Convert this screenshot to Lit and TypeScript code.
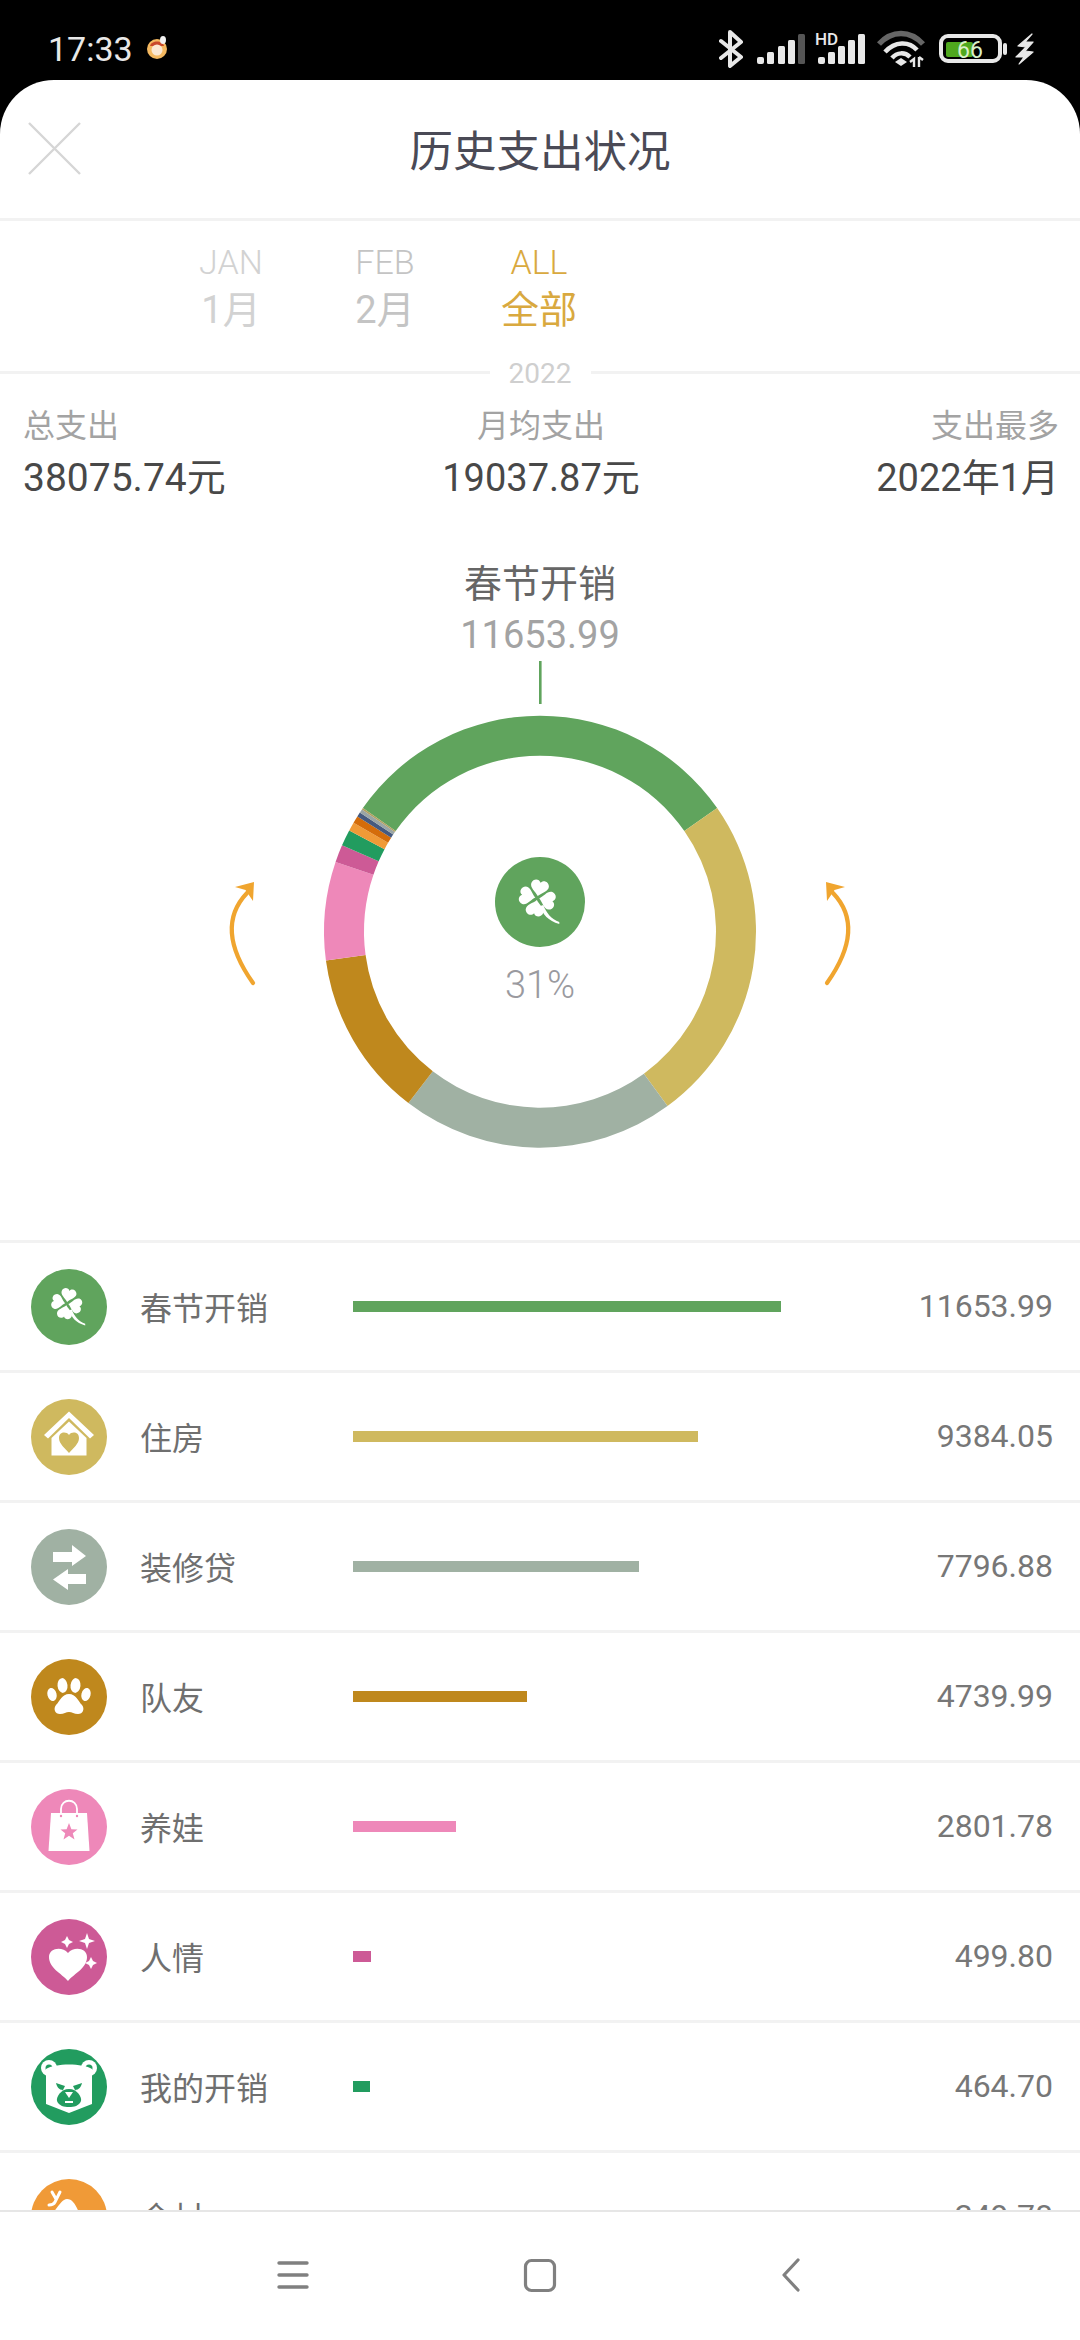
import { LitElement, html, css, svg } from "lit";
import { customElement } from "lit/decorators.js";

const leaf = "M0 -2 C-3 -6 -9.5 -8.5 -9 -13.5 C-8 -18.5 -2 -19.5 0 -15.5 C2 -19.5 8 -18.5 9 -13.5 C9.5 -8.5 3 -6 0 -2Z";
const clover = svg`<g fill="#fff" transform="translate(-2.7 -4)">
  <path d=${leaf} transform="rotate(12)"/>
  <path d=${leaf} transform="rotate(102)"/>
  <path d=${leaf} transform="rotate(192)"/>
  <path d=${leaf} transform="rotate(282)"/>
  <path d="M3 8 C5 16 11 23 22 26 L22 24 C14 21 9 15 6 7Z"/>
</g>`;

const icons: Record<string, unknown> = {
  clover: svg`<g transform="scale(0.84)">${clover}</g>`,
  house: svg`<g fill="#fff">
    <path d="M0 -25.5 L25 -2 L21 1.5 L0 -19 L-21 1.5 L-25 -2Z"/>
    <path d="M0 -15.5 L17.5 1 V18.5 H-17.5 V1Z"/>
    <path d="M0 16 C-4 11 -10 7 -10 1 C-10 -5 -3 -6 0 -2 C3 -6 10 -5 10 1 C10 7 4 11 0 16Z" fill="#cfb95f"/>
  </g>`,
  swap: svg`<g fill="#fff">
    <path d="M-16 -15 H3 V-22 L17 -11 L3 -1 V-5 H-16Z"/>
    <path d="M17 7 H-1 V2 L-16 12.5 L-1 23 V17 H17Z"/>
  </g>`,
  paw: svg`<g fill="#fff">
    <ellipse cx="-17" cy="-2.5" rx="4.6" ry="6.6" transform="rotate(-14 -17 -2.5)"/>
    <ellipse cx="-6.5" cy="-11.5" rx="5" ry="7.4" transform="rotate(-6 -6.5 -11.5)"/>
    <ellipse cx="6.5" cy="-11.5" rx="5" ry="7.4" transform="rotate(6 6.5 -11.5)"/>
    <ellipse cx="17" cy="-2.5" rx="4.6" ry="6.6" transform="rotate(14 17 -2.5)"/>
    <path d="M0 -3 C7 -3 9 4 13 8 C16 12 14 17 9 17 C5 17 3 15 0 15 C-3 15 -5 17 -9 17 C-14 17 -16 12 -13 8 C-9 4 -7 -3 0 -3Z"/>
  </g>`,
  bag: svg`<g>
    <path d="M-18 -14 H18 L20.5 24 H-20.5Z" fill="#fff"/>
    <path d="M-8 -13 V-18 C-8 -29 8 -29 8 -18 V-13" fill="none" stroke="#fff" stroke-width="1.8"/>
    <circle cx="-8" cy="-11" r="1.2" fill="#ee88b9"/><circle cx="8" cy="-11" r="1.2" fill="#ee88b9"/>
    <path d="M0 -4 L2.4 2.2 L8.5 2.4 L3.8 6.2 L5.5 12.5 L0 8.8 L-5.5 12.5 L-3.8 6.2 L-8.5 2.4 L-2.4 2.2Z" fill="#ee88b9"/>
  </g>`,
  heart: svg`<g fill="#fff">
    <path d="M-1 24 C-8 16 -20 11 -20 0 C-20 -9 -7 -11 -1 -4 C5 -11 18 -9 18 0 C18 11 6 16 -1 24Z"/>
    <path d="M-2 -21 L0 -17 L4 -15 L0 -13 L-2 -9 L-4 -13 L-8 -15 L-4 -17Z"/>
    <path d="M18 -24 L20 -18 L26 -16 L20 -14 L18 -8 L16 -14 L10 -16 L16 -18Z"/>
    <path d="M22 0 L24 4 L28 6 L24 8 L22 12 L20 8 L16 6 L20 4Z"/>
  </g>`,
  bear: svg`<g>
    <circle cx="-20" cy="-19" r="8" fill="#fff"/><circle cx="20" cy="-19" r="8" fill="#fff"/>
    <circle cx="-20" cy="-19" r="3.5" fill="#229c5f"/><circle cx="20" cy="-19" r="3.5" fill="#229c5f"/>
    <path d="M-23 -18 C-14 -24 14 -24 23 -18 V17 L0 26 L-23 17Z" fill="#fff"/>
    <path d="M-13 -4 L-4 -1 L-6 3 C-10 3 -12 0 -13 -4Z M13 -4 L4 -1 L6 3 C10 3 12 0 13 -4Z" fill="#229c5f"/>
    <path d="M0 2 C8 2 13 10 12 14 C10 19 5 20 0 20 C-5 20 -10 19 -12 14 C-13 10 -8 2 0 2Z" fill="#229c5f"/>
    <path d="M-4 5 H4 L0 11Z" fill="#fff"/><rect x="-4" y="14" width="8" height="2" fill="#fff"/>
  </g>`,
  orange: svg`<g fill="#fff">
    <path d="M-20 0 C-13 -6 -8 -18 -2 -18 C5 -18 9 -8 12 2 V20 H-20Z"/>
    <path d="M-17 -25 L-13 -18 M-9 -25 L-14 -15 C-15 -13 -17 -12 -20 -12" fill="none" stroke="#fff" stroke-width="3" stroke-linecap="round"/>
  </g>`,
};

interface Item { name: string; color: string; amount: number; text: string; icon: string; }

const items: Item[] = [
  { name: "春节开销", color: "#60a45d", amount: 11653.99, text: "11653.99", icon: "clover" },
  { name: "住房", color: "#cfb95f", amount: 9384.05, text: "9384.05", icon: "house" },
  { name: "装修贷", color: "#a0b1a3", amount: 7796.88, text: "7796.88", icon: "swap" },
  { name: "队友", color: "#bf881d", amount: 4739.99, text: "4739.99", icon: "paw" },
  { name: "养娃", color: "#ee88b9", amount: 2801.78, text: "2801.78", icon: "bag" },
  { name: "人情", color: "#cd5a96", amount: 499.8, text: "499.80", icon: "heart" },
  { name: "我的开销", color: "#229c5f", amount: 464.7, text: "464.70", icon: "bear" },
  { name: "余材", color: "#f09a37", amount: 249.78, text: "249.78", icon: "orange" },
];
const rest = [
  { color: "#d46c0a", amount: 205 },
  { color: "#465a7f", amount: 130 },
  { color: "#9aa5a5", amount: 105 },
  { color: "#b0a060", amount: 45.77 },
];
const TOTAL = 38075.74;

function polar(r: number, deg: number): string {
  const a = (deg * Math.PI) / 180;
  return `${(r * Math.sin(a)).toFixed(2)} ${(-r * Math.cos(a)).toFixed(2)}`;
}
function segment(from: number, to: number, color: string) {
  const large = to - from > 180 ? 1 : 0;
  const d = `M${polar(216, from)} A216 216 0 ${large} 1 ${polar(216, to)} L${polar(176, to)} A176 176 0 ${large} 0 ${polar(176, from)}Z`;
  return svg`<path d=${d} fill=${color}/>`;
}

@customElement("app-root")
export class AppRoot extends LitElement {
  static styles = css`
    :host { display: block; width: 1080px; height: 2340px; background: #000; font-family: Roboto, "Noto Sans CJK SC", sans-serif; overflow: hidden; }
    .page { display: flex; flex-direction: column; height: 2340px; }
    .status { height: 80px; flex: none; display: flex; align-items: flex-start; padding-left: 48px; color: #e8e8e8; }
    .time { font-size: 34px; line-height: 62px; margin-top: 18px; }
    .status svg { display: block; }
    .bunny { margin: 33px 0 0 13px; }
    .sysicons { margin-left: auto; margin-right: 38px; }
    .sheet { flex: 1; min-height: 0; background: #fff; border-radius: 54px 54px 0 0; display: flex; flex-direction: column; overflow: hidden; }
    .header { height: 138px; flex: none; display: flex; align-items: center; justify-content: center; position: relative; border-bottom: 3px solid #f2f2f2; }
    .close { position: absolute; left: 28px; top: 42px; }
    .title { font-size: 43.5px; color: #4a4a56; margin-top: -2px; }
    .tabs { height: 150px; display: flex; padding-left: 154px; flex: none; }
    .tab { width: 154px; display: flex; flex-direction: column; align-items: center; color: #d2d2d2; }
    .tab.mid { color: #c4c4c4; }
    .tab.on { color: #d9a93f; }
    .tab .en { font-size: 34px; line-height: 40px; margin-top: 21px; font-weight: 300; }
    .tab .zh { font-size: 38px; line-height: 50px; margin-top: 3px; }
    .year { height: 3px; background: #f2f2f2; flex: none; display: flex; justify-content: center; }
    .year span { background: #fff; width: 101px; height: 40px; margin-top: -17px; text-align: center; font-size: 28px; line-height: 40px; color: #cfcfcf; }
    .stats { display: grid; grid-template-columns: 1fr auto 1fr; padding: 32px 21px 0 23px; flex: none; }
    .stat { display: flex; flex-direction: column; }
    .stat.c { align-items: center; } .stat.r { align-items: flex-end; }
    .stat .k { font-size: 32px; line-height: 40px; color: #a3a3a3; }
    .stat .v { font-size: 39px; line-height: 50px; color: #484848; margin-top: 7px; }
    .stat.c .v, .stat.r .v { font-size: 38px; }
    .chart { height: 737px; flex: none; display: flex; flex-direction: column; align-items: center; position: relative; }
    .chart-name { font-size: 38px; line-height: 50px; color: #666; margin-top: 56px; position: relative; }
    .chart-amt { font-size: 38px; line-height: 50px; color: #a3a3a3; margin-top: 1px; position: relative; }
    .donut { position: absolute; left: 0; top: 0; }
    .pct { position: absolute; left: 0; right: 0; top: 457px; text-align: center; font-size: 38px; line-height: 50px; color: #9a9a9f; font-weight: 300; }
    .list { flex: 1; min-height: 0; overflow: hidden; }
    .row { height: 127px; border-top: 3px solid #f2f2f2; display: flex; align-items: center; padding: 0 27px 0 31px; }
    .ico { width: 76px; height: 76px; flex: none; display: block; }
    .name { width: 213px; margin-left: 33px; margin-top: -2px; font-size: 32px; color: #6f6f6f; flex: none; }
    .track { flex: 1; display: flex; align-items: center; }
    .bar { height: 11px; }
    .amt { font-size: 32px; color: #777; margin-top: -2px; }
    .nav { height: 130px; flex: none; background: #fff; border-top: 2px solid #e6e6e6; box-sizing: border-box; }
    .nav svg { display: block; }
  `;

  private renderStatus() {
    const bars = (xs: number[], dim: boolean) => svg`
      <rect x=${xs[0]} y="57" width="7" height="7" rx="2" fill="#e8e8e8"/>
      <rect x=${xs[1]} y="52" width="7" height="12" rx="1.5" fill="#e8e8e8"/>
      <rect x=${xs[2]} y="46" width="7" height="18" rx="1.5" fill="#e8e8e8"/>
      <rect x=${xs[3]} y="40" width="7" height="24" rx="1.5" fill="#e8e8e8"/>
      <rect x=${xs[4]} y="34" width="7" height="30" rx="1.5" fill=${dim ? "#555" : "#e8e8e8"}/>`;
    return html`<svg class="sysicons" width="323" height="80" viewBox="719 0 323 80">
      <path d="M721 41 L741 57 L730 66 V32 L741 42 L721 58" fill="none" stroke="#e8e8e8" stroke-width="4" stroke-linejoin="round" stroke-linecap="round"/>
      ${bars([757, 767, 778, 788, 798], true)}
      ${bars([818, 828, 838, 848, 858], false)}
      <text x="815" y="44.5" font-size="17" font-weight="500" fill="#e8e8e8" font-family="Roboto">HD</text>
      <path d="M879 44 C892 30 910 30 923 44" fill="none" stroke="#666" stroke-width="5.5"/>
      <path d="M885 52 C895 41 909 41 917 50" fill="none" stroke="#e8e8e8" stroke-width="4.5"/>
      <path d="M892 58 C897 52 905 52 910 57" fill="none" stroke="#e8e8e8" stroke-width="4.5"/>
      <path d="M895 62 L901 58 L907 62 L901 66Z" fill="#e8e8e8"/>
      <path d="M914 67 V59 L910 62 M919 57 V67 M919 57 L923 60" fill="none" stroke="#e8e8e8" stroke-width="2.4"/>
      <rect x="941" y="36" width="59" height="25" rx="7" fill="none" stroke="#e8e8e8" stroke-width="4"/>
      <rect x="946" y="42" width="27" height="15" rx="2" fill="#4fa81e"/>
      <text x="957" y="58" font-size="23" fill="#d9f0c8" font-family="Roboto">66</text>
      <rect x="1003" y="43" width="4" height="12" rx="2" fill="#e8e8e8"/>
      <path d="M1032 34 L1018 46 L1026 47 L1016 57 L1024 57 L1019 64 L1033 52 L1025 51 L1033 42 L1025 42Z" fill="#e8e8e8" stroke="#e8e8e8" stroke-width="1.2" stroke-linejoin="round"/>
    </svg>`;
  }

  private renderDonut() {
    const segs: unknown[] = [];
    let a = -(items[0].amount / TOTAL) * 180;
    for (const it of [...items, ...rest]) {
      const sweep = (it.amount / TOTAL) * 360;
      segs.push(segment(a, a + sweep, it.color));
      a += sweep;
    }
    return html`<svg class="donut" width="1080" height="737" viewBox="0 0 1080 737">
      <rect x="539" y="158" width="2.6" height="43" fill="#60a45d"/>
      <g transform="translate(540 428.7)">
        ${segs}
        <g transform="translate(0 -29.7)">
          <circle r="45" fill="#60a45d"/>
          ${clover}
        </g>
      </g>
      <g fill="none" stroke="#f0a52f" stroke-width="4.2" stroke-linecap="round">
        <path d="M253 480 C226 442 226 412 247 390"/>
        <path d="M827 480 C854 442 854 412 833 390"/>
      </g>
      <path d="M254 379 L235 384 L245.5 387 L253 398Z" fill="#f0a52f"/>
      <path d="M826 379 L845 384 L834.5 387 L827 398Z" fill="#f0a52f"/>
    </svg>`;
  }

  render() {
    const tabs = [
      { en: "JAN", zh: "1月", cls: "" },
      { en: "FEB", zh: "2月", cls: "mid" },
      { en: "ALL", zh: "全部", cls: "on" },
    ];
    return html`<div class="page">
      <div class="status">
        <span class="time">17:33</span>
        <svg class="bunny" width="24" height="30" viewBox="0 0 24 30">
          <circle cx="11" cy="16" r="10" fill="#f4b860"/>
          <path d="M4 13 C5 7 17 7 18 13Z" fill="#c9482a"/>
          <circle cx="11" cy="17" r="5.5" fill="#fbe7d2"/>
          <ellipse cx="17" cy="7" rx="3" ry="4" fill="#f2f2f2"/>
        </svg>
        ${this.renderStatus()}
      </div>
      <div class="sheet">
        <div class="header">
          <svg class="close" width="53" height="53" viewBox="0 0 53 53">
            <path d="M1 1 L52 52 M52 1 L1 52" stroke="#d6d6d6" stroke-width="2.4"/>
          </svg>
          <div class="title">历史支出状况</div>
        </div>
        <div class="tabs">
          ${tabs.map((t) => html`<div class="tab ${t.cls}">
            <span class="en">${t.en}</span><span class="zh">${t.zh}</span>
          </div>`)}
        </div>
        <div class="year"><span>2022</span></div>
        <div class="stats">
          <div class="stat"><span class="k">总支出</span><span class="v">38075.74元</span></div>
          <div class="stat c"><span class="k">月均支出</span><span class="v">19037.87元</span></div>
          <div class="stat r"><span class="k">支出最多</span><span class="v">2022年1月</span></div>
        </div>
        <div class="chart">
          ${this.renderDonut()}
          <div class="chart-name">春节开销</div>
          <div class="chart-amt">11653.99</div>
          <div class="pct">31%</div>
        </div>
        <div class="list">
          ${items.map((it) => html`<div class="row">
            <svg class="ico" viewBox="-38 -38 76 76">
              <circle r="38" fill=${it.color}/>${icons[it.icon]}
            </svg>
            <span class="name">${it.name}</span>
            <div class="track"><div class="bar" style="width:${(it.amount / 11653.99) * 428}px;background:${it.color}"></div></div>
            <span class="amt">${it.text}</span>
          </div>`)}
        </div>
      </div>
      <div class="nav">
        <svg width="1080" height="128" viewBox="0 2212 1080 128">
          <path d="M279 2263 H307 M279 2275 H307 M279 2287 H307" stroke="#808080" stroke-width="3.4" stroke-linecap="round" fill="none"/>
          <rect x="525.5" y="2260.5" width="29" height="30" rx="6" fill="none" stroke="#808080" stroke-width="3.2"/>
          <path d="M798 2260 L784 2275 L798 2290" fill="none" stroke="#808080" stroke-width="3.2" stroke-linecap="round" stroke-linejoin="round"/>
        </svg>
      </div>
    </div>`;
  }
}
